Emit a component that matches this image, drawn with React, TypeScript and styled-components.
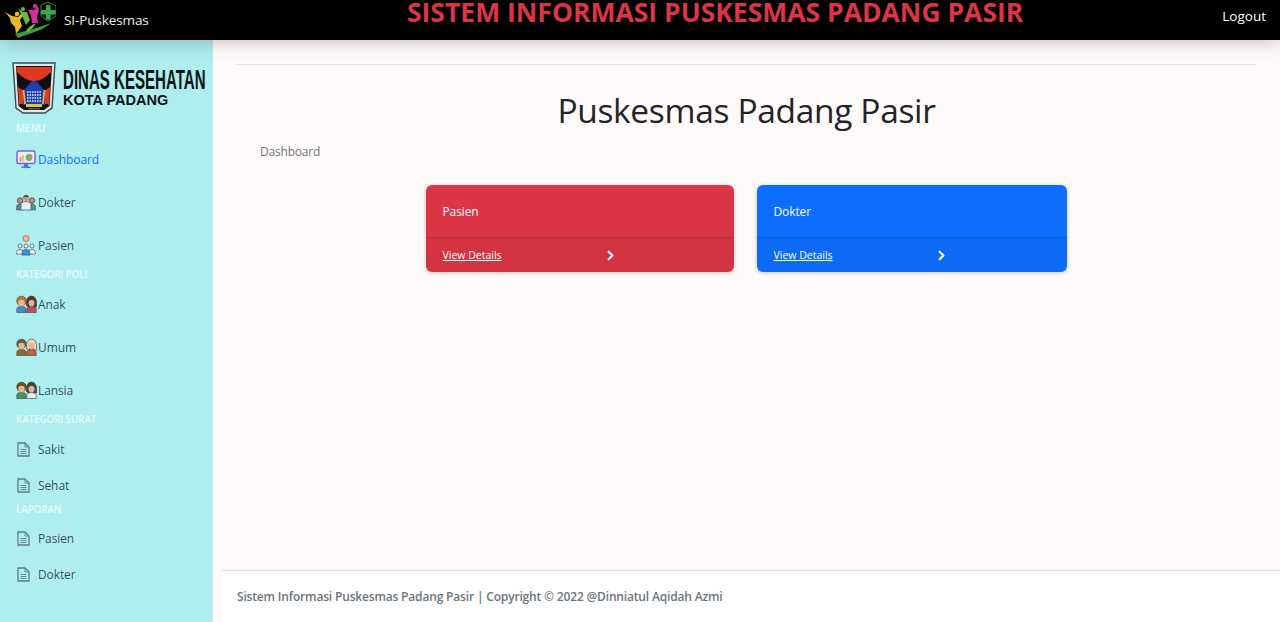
import React from 'react';
import styled, { createGlobalStyle } from 'styled-components';
import { ChevronRight } from 'lucide-react';

const Global = createGlobalStyle`
  html, body { margin: 0; padding: 0; height: 100%; overflow: hidden; }
  body { font-family: "Open Sans", "Noto Sans", sans-serif; }
  * { box-sizing: border-box; }
`;
const Page = styled.div`
  width: 1280px; height: 622px; display: grid; grid-template-rows: 40px 1fr; background: #fffafa; overflow: hidden;
`;
const TopBar = styled.header`
  display: flex; background: #000; color: #fff; z-index: 2; position: relative;
  box-shadow: 0 2px 18px rgba(60, 45, 40, .28);
`;
const Brand = styled.a`
  width: 407px; flex: none; display: flex; align-items: center; gap: 8px; padding-left: 4px; font-size: 13.5px; color: #e9ecef; letter-spacing: -.1px;
`;
const SiteTitle = styled.h1`
  margin: 0; width: 617px; flex: none; font-size: 26.5px; line-height: 25px; font-weight: 700; color: #dc3545; white-space: nowrap;
`;
const Logout = styled.a`
  margin-left: auto; padding: 0 14px 0 0; align-self: center; font-size: 13.5px; font-weight: 400; color: #fff; margin-top: -8px;
`;
const Body = styled.div`
  display: grid; grid-template-columns: 213px 1fr; min-height: 0;
`;
const Sidebar = styled.aside`
  background: #afeeee; padding-top: 22px; display: flex; flex-direction: column;
`;
const LogoRow = styled.div`
  height: 60px; padding-left: 12px; display: flex; align-items: flex-start; gap: 7px;
`;
const LogoText = styled.div`
  display: flex; flex-direction: column; color: #0d1416; padding-top: 6px;
`;
const LogoMain = styled.span`
  font-family: "Liberation Sans", sans-serif; font-size: 27px; line-height: 24px; font-weight: 700; white-space: nowrap;
  display: inline-block; width: 143px; transform: scaleX(.558); transform-origin: left center;
`;
const LogoSub = styled.span`
  font-family: "Liberation Sans", sans-serif; font-size: 14.5px; line-height: 16px; font-weight: 700; white-space: nowrap;
`;
const Heading = styled.div<{ $top: number; $bottom: number }>`
  height: 12px; line-height: 12px; padding-left: 16px; font-size: 10px; font-weight: 600; color: #e6fbfb; letter-spacing: -.2px;
  margin: ${p => p.$top}px 0 ${p => p.$bottom}px;
`;
const NavItem = styled.a<{ $active?: boolean; $doc?: boolean }>`
  height: ${p => (p.$doc ? 36 : 43)}px; display: flex; align-items: center; padding-left: ${p => (p.$doc ? 17 : 15)}px; gap: ${p => (p.$doc ? 8 : 1)}px;
  font-size: 12px; letter-spacing: -.1px; color: ${p => (p.$active ? '#0d6efd' : 'rgba(33,47,55,.85)')};
`;
const Main = styled.main`
  display: flex; flex-direction: column; min-height: 0;
`;
const Content = styled.div`
  flex: 1; padding: 24px 24px 0;
`;
const Rule = styled.hr`
  margin: 0; border: 0; border-top: 1px solid #e4e0df;
`;
const PageTitle = styled.h2`
  margin: 21px 0 0; text-align: center; font-size: 33.5px; line-height: 48px; font-weight: 400; color: #212529; letter-spacing: -.34px;
`;
const Crumb = styled.div`
  margin: 9px 0 0 23px; font-size: 12px; line-height: 18px; color: #6c757d; letter-spacing: -.2px;
`;
const Cards = styled.div`
  display: flex; justify-content: center; gap: 23px; margin-top: 24px;
`;
const Card = styled.div<{ $bg: string; $w: number }>`
  width: ${p => p.$w}px; height: 87px; border-radius: 6px; background: ${p => p.$bg}; color: #fff; overflow: hidden;
  box-shadow: 0 1px 4px rgba(0,0,0,.22); display: flex; flex-direction: column;
`;
const CardBody = styled.div`
  height: 52px; padding-left: 16.5px; display: flex; align-items: center; font-size: 12px; letter-spacing: -.1px;
`;
const CardFoot = styled.div`
  flex: 1; background: rgba(0,0,0,.035); border-top: 1px solid rgba(0,0,0,.125); padding-left: 16.5px; display: flex; align-items: center;
  font-size: 10.5px;
`;
const Details = styled.a`
  width: 160px; color: #fff; text-decoration: underline;
`;
const Footer = styled.footer`
  height: 52px; margin-left: 9px; background: #fff; border-top: 1px solid #dee2e6; padding: 0 15px; display: flex; align-items: center;
  font-size: 12px; font-weight: 600; color: #6c757d; letter-spacing: -.17px;
`;

const Leaf = () => (
  <svg width="52" height="38" viewBox="0 0 52 38" style={{ flex: 'none' }}>
    <path d="M11 33C22 30 36 26 47 22C38 30 24 33 14 37Z" fill="#3d9a45" />
    <path d="M22 30C24 26 28 24 32 22C30 26 27 29 24 31Z" fill="#6cbb46" />
    <circle cx="13" cy="13" r="2.3" fill="#e6b92b" />
    <path d="M1 11L8 15L14 16L19 11L20 13L16 19L18 25L12 33L11 26L7 22L6 17Z" fill="#e6b92b" />
    <circle cx="19" cy="8" r="2" fill="#6fb83f" />
    <path d="M14 7L19 11L23 11L26 19L22 24L19 17Z" fill="#6fb83f" />
    <circle cx="31" cy="5" r="2.2" fill="#d02f9b" />
    <path d="M24 9L30 9L34 5L35 10L33 15L34 22L28 22L27 15Z" fill="#d02f9b" />
    <path d="M37 4L44 1L52 5L52 15L44 20L37 15Z" fill="none" stroke="#2f8a4a" strokeWidth="1" />
    <path d="M42 4h4.5v5h5v4.500h-5v5H42v-5h-5V9h5Z" fill="#3fa650" />
  </svg>
);
const PadangLogo = () => (
  <svg width="44" height="52" viewBox="0 0 44 52" style={{ flex: 'none' }}>
    <path d="M1 1H43L40 46L33 51H11L4 46Z" fill="#dfe9e4" stroke="#3a4c50" strokeWidth="1.4" />
    <path d="M4 4H40L37.500 44L32 48H12L6.500 44Z" fill="#101012" />
    <path d="M4.500 5H39.500L39 10Q22 28 5 10Z" fill="#e23a20" />
    <path d="M6 25Q10 29 13 28L15 42H8L7 44Z" fill="#e23a20" />
    <path d="M38 25Q34 29 31 28L29 42H36L37 44Z" fill="#e23a20" />
    <path d="M11 29Q16 24 18 21Q22 17 26 21Q28 24 33 29V43H11Z" fill="#1f3fb5" />
    <path d="M15 30H29M15 33H29M15 36H29M15 39H29" stroke="#dfe3d6" strokeWidth="1.300" strokeDasharray="1.600 .9" />
    <path d="M11.500 28L13 42M32.500 28L31 42" stroke="#e3bb2c" strokeWidth="1.800" />
    <path d="M14 42H30V45H14Z" fill="#d9c53a" />
    <path d="M16 46H28V47.500H16Z" fill="#4a5a3a" />
  </svg>
);
const IconSlot = styled.span`
  width: 22px; flex: none; display: flex; justify-content: center; align-items: center;
`;
const skin = '#e9b592';
const line = '#463a36';
const Monitor = () => (
  <svg width="20" height="19" viewBox="0 0 20 19">
    <rect x="1" y="1" width="18" height="12.500" rx="1.500" fill="#f0ecf5" stroke="#7467d8" strokeWidth="1.500" />
    <path d="M8 14h4v2.500H8zM5.500 16.500h9V18h-9z" fill="#5a72d8" />
    <rect x="3.500" y="7" width="2" height="4.500" fill="#e88f8f" /><rect x="6" y="5" width="2" height="6.500" fill="#ecc254" />
    <circle cx="13" cy="7.500" r="3.400" fill="#6db66f" /><path d="M13 7.500V4.100A3.400 3.400 0 0 1 16.400 7.500Z" fill="#ea8b48" />
  </svg>
);
const Doctors = () => (
  <svg width="20" height="18" viewBox="0 0 20 18">
    <path d="M0.500 17v-3q0-3 3.500-3t3.500 3v3Z" fill="#4f8ca0" stroke={line} strokeWidth=".5" />
    <path d="M12.500 17v-3q0-3 3.500-3t3.500 3v3Z" fill="#3f9e88" stroke={line} strokeWidth=".5" />
    <circle cx="4" cy="7.500" r="2.700" fill="#c0907c" stroke="#5a4a4a" strokeWidth=".9" />
    <circle cx="16" cy="7.500" r="2.700" fill="#c0907c" stroke="#5a4a4a" strokeWidth=".9" />
    <path d="M5 17v-5q0-3.400 5-3.400t5 3.400v5Z" fill="#e6eff0" stroke="#56686e" strokeWidth=".8" />
    <circle cx="10" cy="5" r="3" fill="#c99a84" /><path d="M6.800 4.500Q10 -1 13.200 4.500Q10 3 6.800 4.500Z" fill="#4a3d3d" />
  </svg>
);
const Patients = () => (
  <svg width="20" height="21" viewBox="0 0 20 21">
    <circle cx="10" cy="3.600" r="3" fill="#f2b999" stroke="#b06f58" strokeWidth=".9" />
    <circle cx="4" cy="11" r="2" fill="#f8f8f8" stroke="#475a72" strokeWidth=".8" /><path d="M.6 19v-1.500q0-3 3.400-3t3.400 3V19Z" fill="#fff" stroke="#475a72" strokeWidth=".8" />
    <circle cx="16" cy="11" r="2" fill="#f8f8f8" stroke="#475a72" strokeWidth=".8" /><path d="M12.600 19v-1.500q0-3 3.400-3t3.400 3V19Z" fill="#fff" stroke="#475a72" strokeWidth=".8" />
    <circle cx="10" cy="11" r="2" fill="#f8f8f8" stroke="#475a72" strokeWidth=".8" /><path d="M6 20v-2q0-3.500 4-3.500t4 3.500v2Z" fill="#3e90da" stroke="#2e5f8e" strokeWidth=".8" />
  </svg>
);
const Pair = ({ hairA, hairB, bodyA, bodyB }: { hairA: string; hairB: string; bodyA: string; bodyB: string }) => (
  <svg width="21" height="18" viewBox="0 0 21 18">
    <path d="M.8 17.500v-3q0-3 4.700-3t4.700 3v3Z" fill={bodyA} stroke={line} strokeWidth=".6" />
    <path d="M10.800 17.500v-3q0-3 4.700-3t4.700 3v3Z" fill={bodyB} stroke={line} strokeWidth=".6" />
    <circle cx="5.500" cy="6" r="4.800" fill={hairA} stroke={line} strokeWidth=".6" /><circle cx="5.500" cy="8" r="3.200" fill={skin} />
    <path d="M10.500 11Q9.500 1 15.500 1Q21.500 1 20.500 12H17.500V8H13.500V12Z" fill={hairB} stroke={line} strokeWidth=".6" /><circle cx="15.500" cy="8" r="3" fill={skin} />
  </svg>
);
const Doc = () => (
  <svg width="13" height="15" viewBox="0 0 13 15" fill="none" stroke="#5f7d84" strokeWidth="1.300">
    <path d="M1 1h7l4 4v9H1Z" /><path d="M8 1v4h4M3.500 7.500h6M3.500 9.500h6M3.500 11.500h6" strokeWidth=".9" />
  </svg>
);

export default function App() {
  return (
    <Page>
      <Global />
      <TopBar>
        <Brand><Leaf />SI-Puskesmas</Brand>
        <SiteTitle>SISTEM INFORMASI PUSKESMAS PADANG PASIR</SiteTitle>
        <Logout>Logout</Logout>
      </TopBar>
      <Body>
        <Sidebar>
          <LogoRow>
            <PadangLogo />
            <LogoText><LogoMain>DINAS KESEHATAN</LogoMain><LogoSub>KOTA PADANG</LogoSub></LogoText>
          </LogoRow>
          <Heading $top={0} $bottom={3.5}>MENU</Heading>
          <NavItem $active><IconSlot><Monitor /></IconSlot>Dashboard</NavItem>
          <NavItem><IconSlot><Doctors /></IconSlot>Dokter</NavItem>
          <NavItem><IconSlot><Patients /></IconSlot>Pasien</NavItem>
          <Heading $top={1.5} $bottom={2.5}>KATEGORI POLI</Heading>
          <NavItem><IconSlot><Pair hairA="#b77a3f" hairB="#5b3434" bodyA="#3f8fc4" bodyB="#c14f5d" /></IconSlot>Anak</NavItem>
          <NavItem><IconSlot><Pair hairA="#6b5a49" hairB="#e5d6b0" bodyA="#8a6a3d" bodyB="#c0603f" /></IconSlot>Umum</NavItem>
          <NavItem><IconSlot><Pair hairA="#7a4b2a" hairB="#3f4a4a" bodyA="#3f9b62" bodyB="#e8eeee" /></IconSlot>Lansia</NavItem>
          <Heading $top={1.5} $bottom={6}>KATEGORI SURAT</Heading>
          <NavItem $doc><Doc />Sakit</NavItem>
          <NavItem $doc><Doc />Sehat</NavItem>
          <Heading $top={0} $bottom={5}>LAPORAN</Heading>
          <NavItem $doc><Doc />Pasien</NavItem>
          <NavItem $doc><Doc />Dokter</NavItem>
        </Sidebar>
        <Main>
          <Content>
            <Rule />
            <PageTitle>Puskesmas Padang Pasir</PageTitle>
            <Crumb>Dashboard</Crumb>
            <Cards>
              <Card $bg="#dc3545" $w={308}>
                <CardBody>Pasien</CardBody>
                <CardFoot><Details>View Details</Details><ChevronRight size={15} strokeWidth={3.5} /></CardFoot>
              </Card>
              <Card $bg="#0d6efd" $w={310}>
                <CardBody>Dokter</CardBody>
                <CardFoot><Details>View Details</Details><ChevronRight size={15} strokeWidth={3.5} /></CardFoot>
              </Card>
            </Cards>
          </Content>
          <Footer>Sistem Informasi Puskesmas Padang Pasir | Copyright © 2022 @Dinniatul Aqidah Azmi</Footer>
        </Main>
      </Body>
    </Page>
  );
}
